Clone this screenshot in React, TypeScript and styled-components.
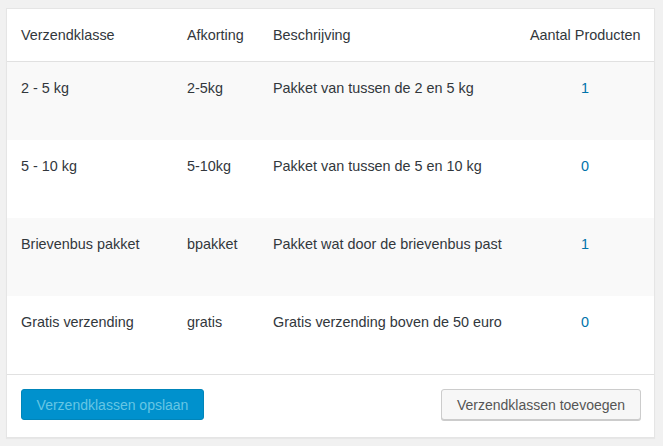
import React from "react";
import styled, { createGlobalStyle } from "styled-components";

const GlobalStyle = createGlobalStyle`
    html, body {
        margin: 0;
        padding: 0;
        background: #f1f1f1;
        font-family: "Liberation Sans", Arial, sans-serif;
        font-size: 13px;
        color: #32373c;
    }
`;

const Page = styled.div`
    padding: 8px 8px 8px 6px;
`;

const Panel = styled.div`
    width: 647px;
    background: #fff;
    border: 1px solid #e5e5e5;
    box-shadow: 0 1px 1px rgba(0, 0, 0, 0.04);
`;

const Row = styled.div<{ $shade?: boolean; $head?: boolean }>`
    display: grid;
    grid-template-columns: 166px 86px 257px 138px;
    height: ${(p) => (p.$head ? "53px" : "78px")};
    background: ${(p) => (p.$shade ? "#f9f9f9" : "#fff")};
    border-bottom: ${(p) => (p.$head ? "1px solid #e1e1e1" : "none")};
    box-sizing: border-box;
`;

const Cell = styled.div<{ $center?: boolean }>`
    padding: 17px 14px 0 14px;
    font-size: 14.4px;
    line-height: 18px;
    white-space: nowrap;
    text-align: ${(p) => (p.$center ? "center" : "left")};
`;

const Count = styled.a`
    color: #0073aa;
    text-decoration: none;
`;

const Footer = styled.div`
    display: flex;
    justify-content: space-between;
    align-items: center;
    border-top: 1px solid #e1e1e1;
    padding: 14px 13px 17px 14px;
`;

const Button = styled.button<{ $primary?: boolean }>`
    font-family: "Liberation Sans", Arial, sans-serif;
    font-size: 14px;
    height: 31px;
    padding: 0 14px;
    border-radius: 3px;
    cursor: pointer;
    border: 1px solid ${(p) => (p.$primary ? "#0085ba" : "#cccccc")};
    background: ${(p) => (p.$primary ? "#0091cd" : "#f7f7f7")};
    color: ${(p) => (p.$primary ? "#66c6e4" : "#555")};
    box-shadow: ${(p) => (p.$primary ? "none" : "0 1px 0 #cccccc")};
`;

const rows = [
    { name: "2 - 5 kg", slug: "2-5kg", desc: "Pakket van tussen de 2 en 5 kg", count: 1 },
    { name: "5 - 10 kg", slug: "5-10kg", desc: "Pakket van tussen de 5 en 10 kg", count: 0 },
    { name: "Brievenbus pakket", slug: "bpakket", desc: "Pakket wat door de brievenbus past", count: 1 },
    { name: "Gratis verzending", slug: "gratis", desc: "Gratis verzending boven de 50 euro", count: 0 },
];

const App: React.FC = () => {
    return (
        <Page>
            <GlobalStyle />
            <Panel>
                <Row $head>
                    <Cell>Verzendklasse</Cell>
                    <Cell>Afkorting</Cell>
                    <Cell>Beschrijving</Cell>
                    <Cell $center>Aantal Producten</Cell>
                </Row>
                {rows.map((r, i) => (
                    <Row key={r.slug} $shade={i % 2 === 0}>
                        <Cell>{r.name}</Cell>
                        <Cell>{r.slug}</Cell>
                        <Cell>{r.desc}</Cell>
                        <Cell $center>
                            <Count href="#">{r.count}</Count>
                        </Cell>
                    </Row>
                ))}
                <Footer>
                    <Button $primary style={{ width: 183 }}>Verzendklassen opslaan</Button>
                    <Button style={{ width: 200 }}>Verzendklassen toevoegen</Button>
                </Footer>
            </Panel>
        </Page>
    );
};

export default App;
